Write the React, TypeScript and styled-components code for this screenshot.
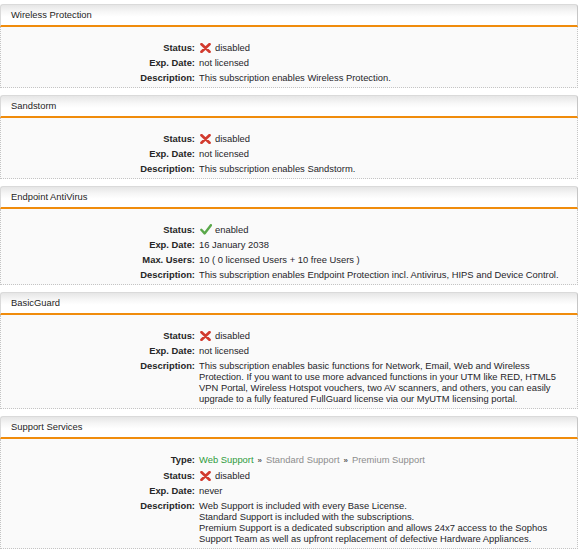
import React from "react";
import styled, { createGlobalStyle } from "styled-components";

const GlobalStyle = createGlobalStyle`
  html, body { margin: 0; padding: 0; background: #ffffff; }
  body {
    padding: 4px 4px 0 0;
    font-family: "Liberation Sans", Arial, sans-serif;
    font-size: 9.4px;
    color: #222;
  }
`;

const Page = styled.div`
  display: flex;
  flex-direction: column;
  gap: 7px;
  width: 578px;
`;

const Panel = styled.section`
  display: flex;
  flex-direction: column;
`;

const PanelHeader = styled.div`
  height: 20px;
  line-height: 20px;
  padding-left: 10px;
  border: 1px solid #dadada;
  border-right-color: #c6c6c6;
  border-bottom: 2px solid #f08c0c;
  border-radius: 3px 3px 0 0;
  background: linear-gradient(#e6e6e6 0%, #f7f7f7 35%, #ffffff 60%, #ffffff 100%);
  color: #1e1e1e;
`;

const PanelBody = styled.div`
  background: #fafafa;
  border: 1px dotted #c4c4c4;
  border-top: none;
  padding: 13px 6px 2px 0;
  display: grid;
  grid-template-columns: 194px 1fr;
  column-gap: 4px;
`;

const Label = styled.div`
  padding: 2px 0;
  line-height: 11px;
  text-align: right;
  font-weight: bold;
  color: #262626;
`;

const Value = styled.div`
  padding: 2px 0;
  line-height: 11px;
  color: #1f1f2a;
  display: flex;
  align-items: center;
  flex-wrap: wrap;
`;

const Text = styled.div`
  line-height: 11px;
`;

const IconWrap = styled.span`
  display: inline-flex;
  width: 12px;
  height: 11px;
  margin-left: 1px;
  margin-right: 3px;
  align-items: center;
  justify-content: flex-start;
`;

const Tier = styled.span<{ $active?: boolean }>`
  color: ${(p) => (p.$active ? "#2f9a3c" : "#8d8d8d")};
`;

const Sep = styled.span`
  color: #5a5a5a;
  font-size: 8px;
  margin: 0 4px;
  font-weight: bold;
`;

const CrossIcon = () => (
  <svg width="11" height="10" viewBox="0 0 11 10">
    <path
      d="M1.5 1.2 L9.5 8.8 M9.5 1.2 L1.5 8.8"
      stroke="#d23a2e"
      strokeWidth="2.7"
      strokeLinecap="round"
      fill="none"
    />
  </svg>
);

const CheckIcon = () => (
  <svg width="12" height="11" viewBox="0 0 12 11">
    <path
      d="M1.3 5.8 L4.6 9.4 L10.9 1.2"
      stroke="#5aa84a"
      strokeWidth="2.4"
      strokeLinecap="round"
      strokeLinejoin="round"
      fill="none"
    />
  </svg>
);

const Status = ({ on }: { on: boolean }) => (
  <>
    <IconWrap>{on ? <CheckIcon /> : <CrossIcon />}</IconWrap>
    <span>{on ? "enabled" : "disabled"}</span>
  </>
);

type Row = { label: string; value: React.ReactNode };

const Section = ({ title, rows }: { title: string; rows: Row[] }) => (
  <Panel>
    <PanelHeader>{title}</PanelHeader>
    <PanelBody>
      {rows.map((r) => (
        <React.Fragment key={r.label}>
          <Label>{r.label}</Label>
          <Value>{r.value}</Value>
        </React.Fragment>
      ))}
    </PanelBody>
  </Panel>
);

export default function App() {
  return (
    <>
      <GlobalStyle />
      <Page>
        <Section
          title="Wireless Protection"
          rows={[
            { label: "Status:", value: <Status on={false} /> },
            { label: "Exp. Date:", value: "not licensed" },
            { label: "Description:", value: "This subscription enables Wireless Protection." },
          ]}
        />
        <Section
          title="Sandstorm"
          rows={[
            { label: "Status:", value: <Status on={false} /> },
            { label: "Exp. Date:", value: "not licensed" },
            { label: "Description:", value: "This subscription enables Sandstorm." },
          ]}
        />
        <Section
          title="Endpoint AntiVirus"
          rows={[
            { label: "Status:", value: <Status on={true} /> },
            { label: "Exp. Date:", value: "16 January 2038" },
            { label: "Max. Users:", value: "10 ( 0 licensed Users + 10 free Users )" },
            {
              label: "Description:",
              value:
                "This subscription enables Endpoint Protection incl. Antivirus, HIPS and Device Control.",
            },
          ]}
        />
        <Section
          title="BasicGuard"
          rows={[
            { label: "Status:", value: <Status on={false} /> },
            { label: "Exp. Date:", value: "not licensed" },
            {
              label: "Description:",
              value: (
                <Text>
                  This subscription enables basic functions for Network, Email, Web and Wireless
                  Protection. If you want to use more advanced functions in your UTM like RED, HTML5
                  VPN Portal, Wireless Hotspot vouchers, two AV scanners, and others, you can easily
                  upgrade to a fully featured FullGuard license via our MyUTM licensing portal.
                </Text>
              ),
            },
          ]}
        />
        <Section
          title="Support Services"
          rows={[
            {
              label: "Type:",
              value: (
                <span>
                  <Tier $active>Web Support</Tier>
                  <Sep>»</Sep>
                  <Tier>Standard Support</Tier>
                  <Sep>»</Sep>
                  <Tier>Premium Support</Tier>
                </span>
              ),
            },
            { label: "Status:", value: <Status on={false} /> },
            { label: "Exp. Date:", value: "never" },
            {
              label: "Description:",
              value: (
                <Text>
                  Web Support is included with every Base License.
                  <br />
                  Standard Support is included with the subscriptions.
                  <br />
                  Premium Support is a dedicated subscription and allows 24x7 access to the Sophos
                  Support Team as well as upfront replacement of defective Hardware Appliances.
                </Text>
              ),
            },
          ]}
        />
      </Page>
    </>
  );
}
